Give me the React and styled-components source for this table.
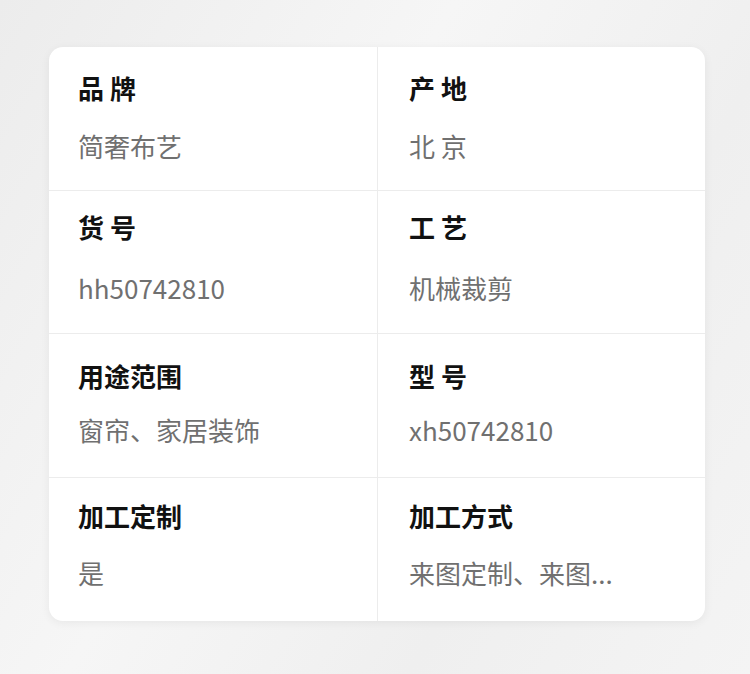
import styled, { createGlobalStyle } from 'styled-components'

const GlobalStyle = createGlobalStyle`
  html, body {
    margin: 0;
    padding: 0;
  }
  body {
    width: 750px;
    height: 674px;
    overflow: hidden;
    background: linear-gradient(120deg, #ececec 0%, #f6f6f6 40%, #efefef 70%, #f4f4f4 100%);
    font-family: "Noto Sans CJK SC", "Noto Sans", sans-serif;
  }
`;

const Page = styled.main`
  padding: 47px 0 0 49px;
`;

const Card = styled.section`
  width: 656px;
  background: #ffffff;
  border-radius: 14px;
  box-shadow: 0 2px 10px rgba(0, 0, 0, 0.06);
  display: grid;
  grid-template-columns: 328px 328px;
  grid-template-rows: 143px 143px 144px 144px;
  overflow: hidden;
`;

const Cell = styled.div`
  box-sizing: border-box;
  padding: ${({ $top }) => $top}px 0 0 ${({ $right }) => ($right ? 31 : 29)}px;
  border-left: ${({ $right }) => ($right ? '1px solid #ececec' : 'none')};
  border-top: ${({ $first }) => ($first ? 'none' : '1px solid #ececec')};
  display: flex;
  flex-direction: column;
  gap: ${({ $gap }) => $gap}px;
`;

const Label = styled.div`
  font-size: 26px;
  line-height: 32px;
  font-weight: 700;
  color: #111;
  white-space: pre;
`;

const Value = styled.div`
  font-size: 26px;
  line-height: 32px;
  font-weight: 400;
  color: #707070;
`;

const rows = [
  { top: 25, gap: 26, items: [['品 牌', '简奢布艺'], ['产 地', '北 京']] },
  { top: 20, gap: 29, items: [['货 号', 'hh50742810'], ['工 艺', '机械裁剪']] },
  { top: 26, gap: 22, items: [['用途范围', '窗帘、家居装饰'], ['型 号', 'xh50742810']] },
  { top: 22, gap: 25, items: [['加工定制', '是'], ['加工方式', '来图定制、来图...']] },
];

export default function App() {
  return (
    <>
      <GlobalStyle />
      <Page>
        <Card>
          {rows.map((row, i) =>
            row.items.map(([label, value], j) => (
              <Cell key={label} $top={row.top} $gap={row.gap} $right={j === 1} $first={i === 0}>
                <Label>{label}</Label>
                <Value>{value}</Value>
              </Cell>
            ))
          )}
        </Card>
      </Page>
    </>
  )
}
